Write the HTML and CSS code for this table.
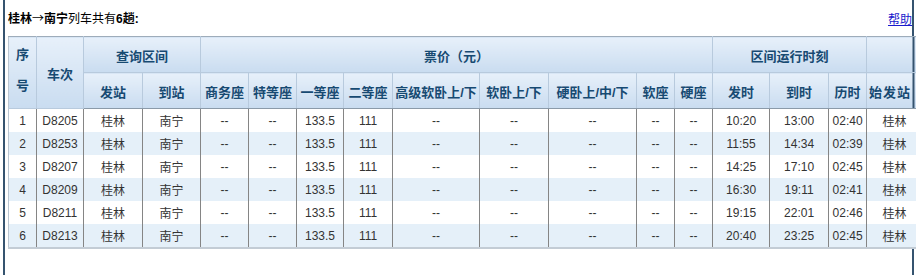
FILE: index.html
```html
<!DOCTYPE html>
<html lang="zh-CN">
<head>
<meta charset="utf-8">
<title>桂林→南宁</title>
<link rel="stylesheet" href="styles.css">
</head>
<body>
<div class="frame">
  <div class="titlebar">
    <div class="title"><b>桂林<span class="arrow">→</span>南宁</b>列车共有<b>6趟:</b></div>
    <a class="help" href="#">帮助</a>
  </div>
  <table class="trains">
    <colgroup>
      <col style="width:28px"><col style="width:47px"><col style="width:59px"><col style="width:58px">
      <col style="width:48px"><col style="width:48px"><col style="width:47px"><col style="width:49px">
      <col style="width:87px"><col style="width:69px"><col style="width:88px"><col style="width:38px">
      <col style="width:38px"><col style="width:57px"><col style="width:59px"><col style="width:38px">
      <col style="width:56px">
    </colgroup>
    <thead>
      <tr class="h1">
        <th rowspan="2" class="seq">序<br>号</th>
        <th rowspan="2">车次</th>
        <th colspan="2">查询区间</th>
        <th colspan="9">票价（元）</th>
        <th colspan="3">区间运行时刻</th>
        <th class="edge"></th>
      </tr>
      <tr class="h2">
        <th>发站</th><th>到站</th>
        <th>商务座</th><th>特等座</th><th>一等座</th><th>二等座</th>
        <th>高级软卧上/下</th><th>软卧上/下</th><th>硬卧上/中/下</th><th>软座</th><th>硬座</th>
        <th>发时</th><th>到时</th><th>历时</th><th class="edge last">始发站</th>
      </tr>
    </thead>
    <tbody>
      <tr><td>1</td><td>D8205</td><td>桂林</td><td>南宁</td><td>--</td><td>--</td><td>133.5</td><td>111</td><td>--</td><td>--</td><td>--</td><td>--</td><td>--</td><td>10:20</td><td>13:00</td><td>02:40</td><td>桂林</td></tr>
      <tr><td>2</td><td>D8253</td><td>桂林</td><td>南宁</td><td>--</td><td>--</td><td>133.5</td><td>111</td><td>--</td><td>--</td><td>--</td><td>--</td><td>--</td><td>11:55</td><td>14:34</td><td>02:39</td><td>桂林</td></tr>
      <tr><td>3</td><td>D8207</td><td>桂林</td><td>南宁</td><td>--</td><td>--</td><td>133.5</td><td>111</td><td>--</td><td>--</td><td>--</td><td>--</td><td>--</td><td>14:25</td><td>17:10</td><td>02:45</td><td>桂林</td></tr>
      <tr><td>4</td><td>D8209</td><td>桂林</td><td>南宁</td><td>--</td><td>--</td><td>133.5</td><td>111</td><td>--</td><td>--</td><td>--</td><td>--</td><td>--</td><td>16:30</td><td>19:11</td><td>02:41</td><td>桂林</td></tr>
      <tr><td>5</td><td>D8211</td><td>桂林</td><td>南宁</td><td>--</td><td>--</td><td>133.5</td><td>111</td><td>--</td><td>--</td><td>--</td><td>--</td><td>--</td><td>19:15</td><td>22:01</td><td>02:46</td><td>桂林</td></tr>
      <tr><td>6</td><td>D8213</td><td>桂林</td><td>南宁</td><td>--</td><td>--</td><td>133.5</td><td>111</td><td>--</td><td>--</td><td>--</td><td>--</td><td>--</td><td>20:40</td><td>23:25</td><td>02:45</td><td>桂林</td></tr>
    </tbody>
  </table>
</div>
</body>
</html>
```

FILE: styles.css
```css
html, body {
  margin: 0;
  padding: 0;
  height: 100%;
  overflow: hidden;
  background: #fff;
}
body {
  font-family: "Liberation Sans", "Noto Sans CJK SC", sans-serif;
  font-size: 12px;
  color: #333;
}
.frame {
  margin-left: 3px;
  width: 904px;
  height: 100%;
  padding-left: 3px;
  border-left: 2px solid #35536f;
  border-right: 2px solid #35536f;
}
.titlebar {
  height: 36px;
  box-sizing: border-box;
  padding-top: 11px;
  display: flex;
  justify-content: space-between;
  align-items: flex-start;
  line-height: 14px;
  color: #000;
}
.title b { font-weight: bold; }
.title .arrow {
  font-family: "Noto Sans CJK SC", sans-serif;
  font-weight: normal;
}
.help {
  color: #1a1acc;
  text-decoration: underline;
  line-height: 15px;
  margin-top: 2px;
}
.trains {
  width: 914px;
  table-layout: fixed;
  border-collapse: collapse;
}
.trains th {
  background: linear-gradient(#e7f0fa, #c9dcf0);
  color: #174a72;
  font-size: 13px;
  font-weight: bold;
  height: 33px;
  padding: 2px 0 0;
  text-align: center;
  vertical-align: middle;
  border: 1px solid #b8cadd;
  white-space: nowrap;
  overflow: hidden;
}
.trains tr.h1 th { border-top: 1px solid #9eacba; }
.trains tr.h2 th { border-bottom: 1px solid #8b9aa9; }
.trains th.seq {
  line-height: 31px;
  vertical-align: top;
  padding-top: 2px;
}
.trains th.edge {
  background:
    linear-gradient(to right, transparent 45px, #35536f 45px, #35536f 47px, transparent 47px),
    linear-gradient(#e7f0fa, #c9dcf0);
}
.trains th.last {
  text-align: left;
  padding-left: 2px;
  letter-spacing: 1px;
}
.trains td {
  height: 23px;
  padding: 0;
  text-align: center;
  vertical-align: middle;
  background: #fff;
  border-left: 1px solid #858585;
  border-right: 1px solid #858585;
  white-space: nowrap;
  overflow: hidden;
  color: #333;
}
.trains td:first-child,
.trains th:first-child { border-left: 1px solid #b9c5d1; }
.trains tbody tr:nth-child(even) td { background: #e5f0f9; }
.trains tbody tr:last-child td { border-bottom: 2px solid #c3ccd5; }
```
